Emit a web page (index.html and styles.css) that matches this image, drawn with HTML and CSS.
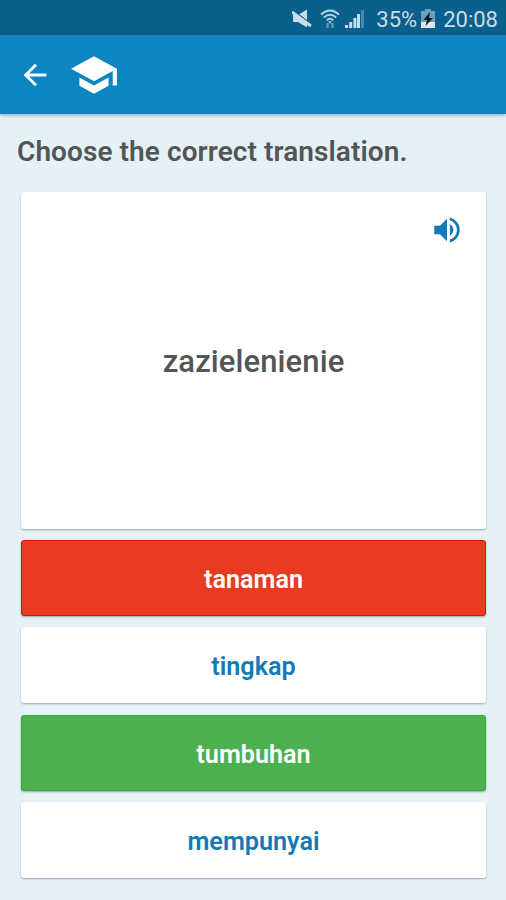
FILE: index.html
```html
<!DOCTYPE html>
<html lang="en">
<head>
  <meta charset="UTF-8">
  <meta name="viewport" content="width=device-width, initial-scale=1.0">
  <title>Choose the correct translation</title>
  <link rel="stylesheet" href="styles.css">
</head>
<body>
  <div class="status-bar">
    <svg class="status-mute" viewBox="0 0 20 20" width="20" height="20">
      <path d="M1 6h5l9-5.500v18L6 13H1z" fill="#c9dde8"/>
      <path d="M0 1l19 14" stroke="#0a5f8c" stroke-width="1.6"/>
      <path d="M0 3l19 14" stroke="#c9dde8" stroke-width="2.8"/>
    </svg>
    <svg class="status-wifi" viewBox="0 0 20 20" width="20" height="20">
      <g fill="none" stroke="#b9d3e0" stroke-width="1.8">
        <path d="M1 5.500q9-8 18 0"/>
        <path d="M3.800 8.500q6.200-5.500 12.400 0"/>
        <path d="M6.600 11.300q3.400-3 6.800 0"/>
      </g>
      <path d="M8 12.200h4l-2 2.500z" fill="#b9d3e0"/>
      <path d="M7.500 14v5M12.500 14v5" stroke="#5b9abb" stroke-width="2.4"/>
    </svg>
    <svg class="status-signal" viewBox="0 0 20 20" width="20" height="20">
      <path d="M0 16h3v3H0zM4.200 13h3v6h-3zM8.400 9h3v10h-3zM12 5h3v14h-3z" fill="#c9dde8"/>
      <path d="M16 1h3v18h-3z" fill="#4689ac"/>
    </svg>
    <span class="battery-level">35%</span>
    <svg class="status-battery" viewBox="0 0 14 20" width="14" height="20">
      <path d="M4 0h6v2h4v12H0V2h4z" fill="#6e9fb8"/>
      <path d="M0 13h14v6H0z" fill="#dce8ef"/>
      <path d="M9 3L2.500 11H6l-1.500 6L12 9H8z" fill="#081a24"/>
    </svg>
    <span class="clock">20:08</span>
  </div>

  <header class="toolbar">
    <svg class="back-icon" viewBox="0 0 24 24" width="34" height="34">
      <path d="M20 11H7.830l5.590-5.590L12 4l-8 8 8 8 1.410-1.410L7.830 13H20v-2z"/>
    </svg>
    <svg class="school-icon" viewBox="0 0 24 24" width="50" height="50">
      <path d="M5 13.180v4L12 21l7-3.820v-4L12 17l-7-3.820zM12 3L1 9l11 6 9-4.910V17h2V9L12 3z"/>
    </svg>
  </header>

  <main class="quiz">
    <h1>Choose the correct translation.</h1>

    <div class="word-card">
      <svg class="sound-icon" viewBox="0 0 24 24" width="34" height="34">
        <path d="M3 9v6h4l5 5V4L7 9H3zm13.500 3c0-1.770-1.020-3.290-2.500-4.030v8.050c1.480-.730 2.500-2.250 2.500-4.020zM14 3.230v2.060c2.890.860 5 3.540 5 6.710s-2.110 5.850-5 6.710v2.060c4.010-.910 7-4.490 7-8.770s-2.990-7.860-7-8.770z"/>
      </svg>
      <span class="word">zazielenienie</span>
    </div>

    <div class="answers">
      <button class="answer wrong">tanaman</button>
      <button class="answer">tingkap</button>
      <button class="answer correct">tumbuhan</button>
      <button class="answer">mempunyai</button>
    </div>
  </main>
</body>
</html>
```

FILE: styles.css
```css
:root {
  --primary-color: #0c86c1;
  --primary-dark: #0a5f8c;
  --background: #e4f2f8;
  --text-color: #555;
  --answer-color: #107bb5;
  --wrong-color: #e83b1f;
  --correct-color: #4caf50;
}

* {
  box-sizing: border-box;
  margin: 0;
  padding: 0;
}

body {
  font-family: Roboto, sans-serif;
  background-color: var(--background);
  color: var(--text-color);
  height: 900px;
  overflow: hidden;
}

svg {
  display: block;
  flex: none;
}

.status-bar {
  display: flex;
  align-items: center;
  justify-content: flex-end;
  height: 35px;
  padding: 3px 8px 0 0;
  background-color: var(--primary-dark);
  color: #c9dde8;
  font-size: 22px;
}

.status-wifi {
  margin-left: 8px;
}

.status-signal {
  margin-left: 5px;
}

.battery-level {
  margin-left: 11px;
}

.status-battery {
  margin-left: 4px;
}

.clock {
  margin-left: 8px;
}

.toolbar {
  display: flex;
  align-items: center;
  gap: 17px;
  height: 79px;
  padding-left: 18px;
  background-color: var(--primary-color);
  box-shadow: 0 1px 4px rgba(40, 50, 90, 0.45);
  fill: #fff;
}

.quiz {
  padding: 20px 20px 0 21px;
}

h1 {
  margin-left: -4px;
  font-size: 28px;
  font-weight: 600;
  line-height: 36px;
  letter-spacing: 0.08px;
  white-space: nowrap;
}

.word-card {
  position: relative;
  display: flex;
  align-items: center;
  justify-content: center;
  height: 337px;
  margin-top: 22px;
  background-color: #fff;
  border-radius: 3px;
  box-shadow: 0 1px 2px rgba(40, 60, 60, 0.4);
}

.sound-icon {
  position: absolute;
  top: 21px;
  right: 22px;
  fill: var(--answer-color);
}

.word {
  padding-top: 2px;
  font-size: 31px;
  font-weight: 500;
  letter-spacing: 0.1px;
}

.answers {
  display: grid;
  grid-auto-rows: 76px;
  gap: 11.3px;
  margin-top: 11px;
}

.answer {
  padding-top: 3px;
  border: none;
  border-radius: 3px;
  background-color: #fff;
  box-shadow: 0 1px 2px rgba(40, 60, 60, 0.4);
  color: var(--answer-color);
  font-family: inherit;
  font-size: 25.2px;
  font-weight: 600;
}

.wrong {
  border: 1px solid #e21208;
  background-color: var(--wrong-color);
  color: #fff;
}

.correct {
  border: 1px solid #39a93e;
  background-color: var(--correct-color);
  color: #fff;
}
```
